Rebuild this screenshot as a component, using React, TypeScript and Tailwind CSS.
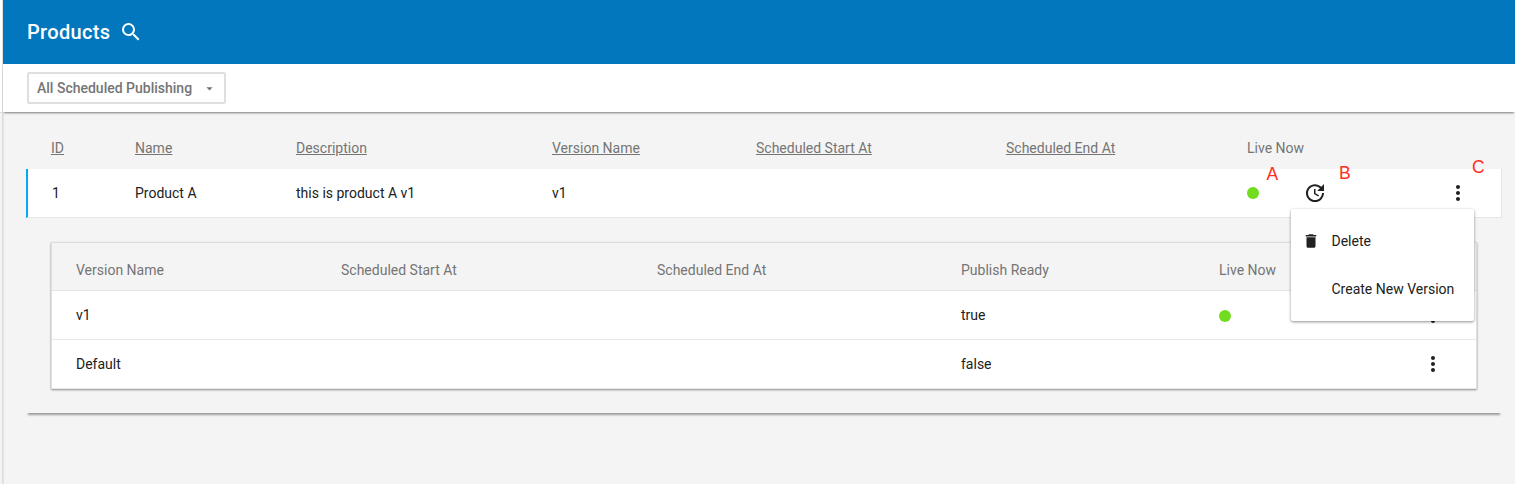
import type { ReactNode } from 'react';
import { MdArrowDropDown, MdDelete, MdMoreVert, MdSearch, MdUpdate } from 'react-icons/md';

const productGrid = 'grid grid-cols-[84px_161px_256px_204px_250px_241px_58px_141px_1fr] items-center';
const versionGrid = 'grid grid-cols-[265px_316px_304px_258px_204px_1fr] items-center';

const productColumns = ['ID', 'Name', 'Description', 'Version Name', 'Scheduled Start At', 'Scheduled End At'];
const versionColumns = ['Version Name', 'Scheduled Start At', 'Scheduled End At', 'Publish Ready', 'Live Now'];

const versions = [
  { name: 'v1', ready: 'true', live: true },
  { name: 'Default', ready: 'false', live: false },
];

function LiveDot() {
  return <span className="block size-3 rounded-full bg-[#72dc20]" />;
}

function Marker({ className, children }: { className: string; children: ReactNode }) {
  return (
    <span className={`absolute font-['Liberation_Sans',sans-serif] text-[17.5px] leading-5 text-[#ff2f20] ${className}`}>
      {children}
    </span>
  );
}

function ActionMenu() {
  return (
    <div className="absolute top-10 right-7 z-10 h-28 w-[183px] rounded-xs bg-white py-2 shadow-[0_1px_3px_rgba(0,0,0,0.45)]">
      <button className="flex h-12 w-full items-center pl-[11px]">
        <MdDelete className="size-[18px]" />
        <span className="ml-[11.5px]">Delete</span>
      </button>
      <button className="flex h-12 w-full items-center pl-[40.5px] whitespace-nowrap">Create New Version</button>
    </div>
  );
}

export default function App() {
  return (
    <div className="flex h-[484px] w-full overflow-hidden bg-[#f4f4f4] font-[Roboto,sans-serif] text-sm text-[#212121]">
      <div className="flex w-[3px] shrink-0 flex-col border-r border-[#dedede]">
        <div className="h-[113px] border-b border-[#dedede] bg-white" />
      </div>
      <main className="min-w-0 flex-1 shadow-[inset_1px_0_0_#e4e4e4]">
        <header className="flex h-16 items-center bg-[#0277bd] pl-6 text-white">
          <h1 className="text-xl font-medium tracking-[0.35px]">Products</h1>
          <MdSearch className="ml-[8px] size-6" />
        </header>
        <div className="flex h-12 items-center bg-white pl-6 shadow-[0_2px_2px_-1px_rgba(0,0,0,0.5)]">
          <button className="flex h-8 w-[199px] items-center rounded-xs border-2 border-[#dfdfdf] pl-2 font-medium text-[#757575]">
            All Scheduled Publishing
            <MdArrowDropDown className="ml-2.5 size-[15px]" />
          </button>
        </div>

        <section className="ml-[23px] h-[301px] w-[1476px] shadow-[0_4px_2px_-2px_rgba(0,0,0,0.36)]">
          <div className={`${productGrid} h-[57px] pt-[15px] pl-[25px] text-[#757575]`}>
            {productColumns.map((name) => (
              <span key={name} className="underline underline-offset-1">{name}</span>
            ))}
            <span className="whitespace-nowrap">Live Now</span>
          </div>
          <div className="relative">
            <div className={`${productGrid} h-[49px] border-r border-b border-l-2 border-r-[#e4e4e4] border-b-[#e7e7e7] border-l-[#03a9f4] bg-white pl-[23px]`}>
              <span className="pl-px">1</span>
              <span>Product A</span>
              <span>this is product A v1</span>
              <span>v1</span>
              <span />
              <span />
              <LiveDot />
              <MdUpdate className="-ml-[2.5px] size-6" />
              <MdMoreVert className="size-6" />
            </div>
            <Marker className="top-[-5px] left-[1240.5px]">A</Marker>
            <Marker className="top-[-6px] left-[1313px]">B</Marker>
            <Marker className="top-[-12px] left-[1446px]">C</Marker>
            <ActionMenu />
          </div>

          <div className="mx-[25px] mt-6 h-[147px] border-x border-[#dedede] bg-white shadow-[0_1px_2px_rgba(0,0,0,0.42)]">
            <div className={`${versionGrid} h-[49px] border-t border-b border-t-[#dedede] border-b-[#e4e4e4] bg-[#f4f4f4] pt-[7px] pl-6 text-[#757575]`}>
              {versionColumns.map((name) => <span key={name}>{name}</span>)}
            </div>
            {versions.map((version) => (
              <div key={version.name} className={`${versionGrid} h-[49px] border-b border-[#e7e7e7] pl-6`}>
                <span>{version.name}</span>
                <span />
                <span />
                <span>{version.ready}</span>
                <span className="pt-px">{version.live && <LiveDot />}</span>
                <MdMoreVert className="-ml-0.5 size-6" />
              </div>
            ))}
          </div>
        </section>
      </main>
    </div>
  );
}
